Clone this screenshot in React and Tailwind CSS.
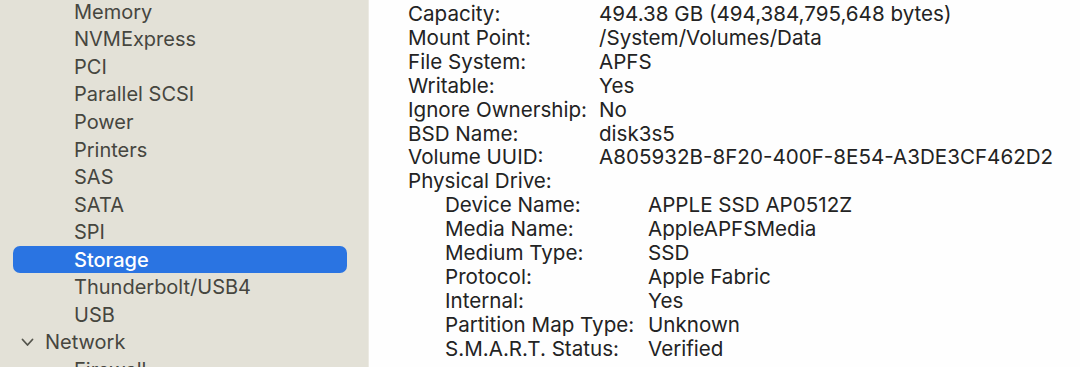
import React from "react";

const sidebar = [
  "Memory",
  "NVMExpress",
  "PCI",
  "Parallel SCSI",
  "Power",
  "Printers",
  "SAS",
  "SATA",
  "SPI",
  "Storage",
  "Thunderbolt/USB4",
  "USB",
];

const top = [
  ["Capacity:", "494.38 GB (494,384,795,648 bytes)"],
  ["Mount Point:", "/System/Volumes/Data"],
  ["File System:", "APFS"],
  ["Writable:", "Yes"],
  ["Ignore Ownership:", "No"],
  ["BSD Name:", "disk3s5"],
  ["Volume UUID:", "A805932B-8F20-400F-8E54-A3DE3CF462D2"],
];

const drive = [
  ["Device Name:", "APPLE SSD AP0512Z"],
  ["Media Name:", "AppleAPFSMedia"],
  ["Medium Type:", "SSD"],
  ["Protocol:", "Apple Fabric"],
  ["Internal:", "Yes"],
  ["Partition Map Type:", "Unknown"],
  ["S.M.A.R.T. Status:", "Verified"],
];

export default function App() {
  return (
    <div
      className="flex w-[1080px] h-[367px] overflow-hidden"
      style={{ fontFamily: "Inter, 'Liberation Sans', sans-serif" }}
    >
      <div className="w-[369px] shrink-0 bg-[#e3e1d7] border-r border-[#eceae3]">
        <div className="-mt-[2px] flex flex-col">
          {sidebar.map((s) => (
            <div
              key={s}
              className={
                s === "Storage"
                  ? "ml-[13px] mr-[21px] h-[27.55px] flex items-center rounded-[7px] bg-[#2a74e2] pl-[61px] text-white text-[20px] font-medium"
                  : "h-[27.55px] flex items-center pl-[74px] text-[#46463f] text-[20px]"
              }
            >
              {s}
            </div>
          ))}
          <div className="h-[27.55px] flex items-center pl-[21px] text-[#46463f] text-[20px]">
            <svg width="13" height="9" viewBox="0 0 13 9" className="mr-[11px]">
              <path d="M1.5 1.5 L6.5 7 L11.5 1.5" fill="none" stroke="#55554d" strokeWidth="1.8" strokeLinecap="round" strokeLinejoin="round" />
            </svg>
            Network
          </div>
          <div className="h-[27.55px] flex items-center pl-[74px] text-[#46463f] text-[20px]">
            Firewall
          </div>
        </div>
      </div>
      <div className="flex-1 bg-[#fefefe] pl-[39px] pt-[2px] text-[20.6px] text-[#232323] leading-[23.9px]">
        {top.map(([k, v]) => (
          <div key={k} className="flex">
            <div className="w-[191px] shrink-0">{k}</div>
            <div>{v}</div>
          </div>
        ))}
        <div>Physical Drive:</div>
        {drive.map(([k, v]) => (
          <div key={k} className="flex pl-[37px]">
            <div className="w-[203px] shrink-0">{k}</div>
            <div>{v}</div>
          </div>
        ))}
      </div>
    </div>
  );
}
